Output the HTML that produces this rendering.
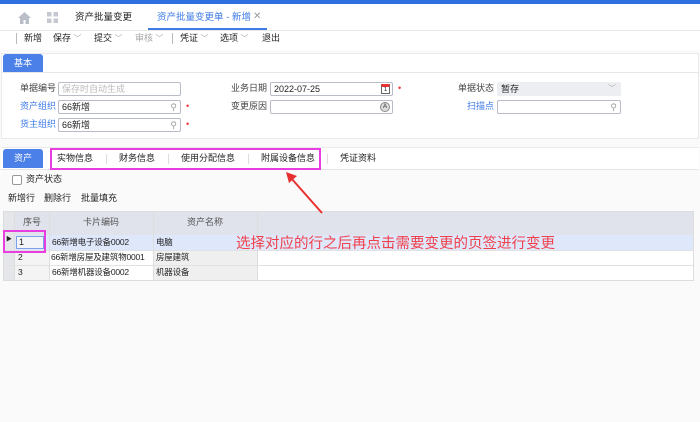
<!DOCTYPE html>
<html><head><meta charset="utf-8"><style>
*{box-sizing:border-box;margin:0;padding:0}
body{width:700px;height:422px;overflow:hidden;background:#fafafa;font-family:"Liberation Sans","Noto Sans CJK SC",sans-serif;font-size:9px;line-height:1.2;color:#222;position:relative}
.a{position:absolute;white-space:nowrap}
.inp{position:absolute;height:14px;border:1px solid #b8bcc8;border-radius:2px;background:#fff;font-size:9px;line-height:12px;padding-left:3px}
.lbl{position:absolute;text-align:right;width:60px;font-size:9px;color:#444}
.blue{color:#3f7be6}
.star{position:absolute;color:#e33;font-size:9px}
.sep{position:absolute;width:1px;background:#ddd}
.v{color:#aaa;font-size:8px}
.t{font-size:8.5px;letter-spacing:-0.2px}
</style></head><body>
<div class="a" style="left:0;top:0;width:700px;height:4px;background:#2f6fe0"></div>
<div class="a" style="left:0;top:4px;width:700px;height:46px;background:#fff"></div>
<svg class="a" style="left:18px;top:12px" width="13" height="12" viewBox="0 0 13 12"><path d="M6.5 0L0 6h2v6h3.5V8h2v4H11V6h2z" fill="#b9bec9"/></svg>
<svg class="a" style="left:47px;top:12px" width="11" height="11"><rect x="0" y="0" width="4.5" height="4.5" fill="#c4c8d0"/><rect x="6.5" y="0" width="4.5" height="4.5" fill="#c4c8d0"/><rect x="0" y="6.5" width="4.5" height="4.5" fill="#c4c8d0"/><rect x="6.5" y="6.5" width="4.5" height="4.5" fill="#c4c8d0"/></svg>
<div class="a" style="left:75px;top:12px;font-size:9.5px">资产批量变更</div>
<div class="a" style="left:157px;top:12px;font-size:9.5px;color:#3f7be6">资产批量变更单 - 新增</div>
<div class="a" style="left:253px;top:11px;font-size:10px;color:#999">✕</div>
<div class="a" style="left:148px;top:28px;width:119px;height:2px;background:#3f7be6"></div>
<div class="a" style="left:0;top:30px;width:700px;height:1px;background:#e8e8e8"></div>
<div class="sep" style="left:16px;top:33px;height:11px;background:#bbb"></div>
<div class="a" style="left:24px;top:33px">新增</div>
<div class="a" style="left:53px;top:33px">保存 <span class="v">﹀</span></div>
<div class="a" style="left:94px;top:33px">提交 <span class="v">﹀</span></div>
<div class="a" style="left:135px;top:33px;color:#aaa">审核 <span class="v">﹀</span></div>
<div class="sep" style="left:172px;top:33px;height:11px;background:#bbb"></div>
<div class="a" style="left:180px;top:33px">凭证 <span class="v">﹀</span></div>
<div class="a" style="left:220px;top:33px">选项 <span class="v">﹀</span></div>
<div class="a" style="left:262px;top:33px">退出</div>
<div class="a" style="left:1px;top:53px;width:698px;height:86px;background:#fff;border:1px solid #eaeaea"></div>
<div class="a" style="left:3px;top:54px;width:40px;height:18px;background:#4b80e8;border-radius:3px 3px 0 0;color:#fff;font-size:9px;text-align:center;line-height:18px">基本</div>
<div class="a" style="left:1px;top:72px;width:698px;height:1px;background:#e4e6ea"></div>
<div class="lbl" style="left:-4px;top:83px">单据编号</div>
<div class="inp" style="left:58px;top:82px;width:123px;color:#bbb">保存时自动生成</div>
<div class="lbl blue" style="left:-4px;top:101px">资产组织</div>
<div class="inp" style="left:58px;top:100px;width:123px">66新增<span style="position:absolute;right:3px;color:#999">⚲</span></div>
<div class="star" style="left:186px;top:101px">•</div>
<div class="lbl blue" style="left:-4px;top:119px">货主组织</div>
<div class="inp" style="left:58px;top:118px;width:123px">66新增<span style="position:absolute;right:3px;color:#999">⚲</span></div>
<div class="star" style="left:186px;top:119px">•</div>
<div class="lbl" style="left:207px;top:83px">业务日期</div>
<div class="inp" style="left:270px;top:82px;width:123px">2022-07-25<span style="position:absolute;right:2px;top:1px;width:9px;height:10px;border:1px solid #666;border-top:3px solid #e33;font-size:6px;line-height:6px;text-align:center">1</span></div>
<div class="star" style="left:398px;top:83px">•</div>
<div class="lbl" style="left:207px;top:101px">变更原因</div>
<div class="inp" style="left:270px;top:100px;width:123px"><span style="position:absolute;right:2px;top:1px;width:10px;height:10px;border-radius:50%;border:1px solid #888;background:#ddd;font-size:6px;line-height:8px;text-align:center">A</span></div>
<div class="lbl" style="left:434px;top:83px">单据状态</div>
<div class="inp" style="left:497px;top:82px;width:124px;background:#eceef2;border-color:#eceef2">暂存<span class="v" style="position:absolute;right:4px">﹀</span></div>
<div class="lbl blue" style="left:434px;top:101px">扫描点</div>
<div class="inp" style="left:497px;top:100px;width:124px"><span style="position:absolute;right:3px;color:#999">⚲</span></div>
<div class="a" style="left:1px;top:147px;width:698px;height:24px;background:#fff;border-top:1px solid #eaeaea"></div>
<div class="a" style="left:3px;top:149px;width:40px;height:19px;background:#4b80e8;border-radius:3px 3px 0 0;color:#fff;text-align:center;line-height:19px">资产</div>
<div class="a" style="left:1px;top:169px;width:698px;height:1px;background:#e4e6ea"></div>
<div class="a" style="left:57px;top:153px">实物信息</div>
<div class="a" style="left:119px;top:153px">财务信息</div>
<div class="a" style="left:181px;top:153px">使用分配信息</div>
<div class="a" style="left:261px;top:153px">附属设备信息</div>
<div class="a" style="left:340px;top:153px">凭证资料</div>
<div class="sep" style="left:106px;top:154px;height:10px"></div>
<div class="sep" style="left:168px;top:154px;height:10px"></div>
<div class="sep" style="left:248px;top:154px;height:10px"></div>
<div class="sep" style="left:327px;top:154px;height:10px"></div>
<div class="a" style="left:50px;top:148px;width:271px;height:22px;border:2px solid #e83ee0"></div>
<div class="a" style="left:1px;top:170px;width:698px;height:36px;background:#fafafa"></div>
<div class="a" style="left:12px;top:175px;width:10px;height:10px;border:1px solid #999;border-radius:2px;background:#fff"></div>
<div class="a" style="left:26px;top:174px">资产状态</div>
<div class="a" style="left:8px;top:193px">新增行</div>
<div class="a" style="left:44px;top:193px">删除行</div>
<div class="a" style="left:81px;top:193px">批量填充</div>
<div class="a" style="left:3px;top:211px;width:691px;height:70px;background:#fff;border:1px solid #ddd"></div>
<div class="a" style="left:4px;top:212px;width:689px;height:23px;background:#e0e3eb"></div>
<div class="a" style="left:4px;top:235px;width:689px;height:15px;background:#dfe7fb"></div>
<div class="a" style="left:4px;top:212px;width:10px;height:68px;background:#e4e6ea"></div>
<div class="a" style="left:153px;top:251px;width:104px;height:29px;background:#efefef"></div>
<div class="a" style="left:14px;top:251px;width:35px;height:29px;background:#f4f4f4"></div>
<div class="a" style="left:4px;top:250px;width:689px;height:1px;background:#e2e2e2"></div>
<div class="a" style="left:4px;top:265px;width:689px;height:1px;background:#e2e2e2"></div>
<div class="sep" style="left:14px;top:212px;height:68px"></div>
<div class="sep" style="left:49px;top:212px;height:68px"></div>
<div class="sep" style="left:153px;top:212px;height:68px"></div>
<div class="sep" style="left:257px;top:212px;height:68px"></div>
<div class="a" style="left:23px;top:217px;color:#555">序号</div>
<div class="a" style="left:83px;top:217px;color:#555">卡片编码</div>
<div class="a" style="left:187px;top:217px;color:#555">资产名称</div>
<div class="a" style="left:6px;top:237px;font-size:6px">▶</div>
<div class="a" style="left:16px;top:236px;width:28px;height:13px;border:1px solid #7aa0e8;background:#f2f4f8;padding-left:2px;line-height:11px">1</div>
<div class="a t" style="left:52px;top:237px">66新增电子设备0002</div>
<div class="a t" style="left:156px;top:237px">电脑</div>
<div class="a t" style="left:18px;top:252px">2</div>
<div class="a t" style="left:51px;top:252px">66新增房屋及建筑物0001</div>
<div class="a t" style="left:156px;top:252px">房屋建筑</div>
<div class="a t" style="left:18px;top:267px">3</div>
<div class="a t" style="left:52px;top:267px">66新增机器设备0002</div>
<div class="a t" style="left:156px;top:267px">机器设备</div>
<div class="a" style="left:3px;top:230px;width:43px;height:23px;border:2px solid #e83ee0"></div>
<div class="a" style="left:236px;top:236px;font-size:14.5px;color:#f0404a">选择对应的行之后再点击需要变更的页签进行变更</div>
<svg class="a" style="left:280px;top:168px" width="50" height="50"><line x1="42" y1="45" x2="11" y2="10" stroke="#e83030" stroke-width="2"/><path d="M6 4 L17 8 L9 15 Z" fill="#e83030"/></svg>
</body></html>
